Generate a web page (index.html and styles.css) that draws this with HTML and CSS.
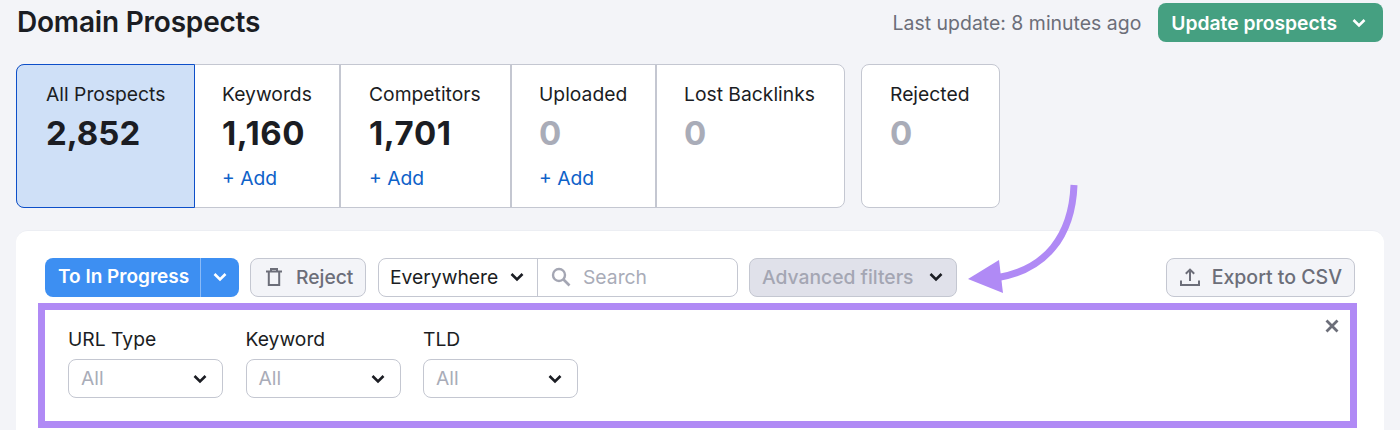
FILE: index.html
```html
<!DOCTYPE html>
<html lang="en">
<head>
<meta charset="utf-8">
<title>Domain Prospects</title>
<link rel="stylesheet" href="styles.css">
</head>
<body>
<div class="page">
  <header class="header">
    <h1 class="title">Domain Prospects</h1>
    <div class="header-right">
      <span class="updated">Last update: 8 minutes ago</span>
      <button class="btn-green">Update prospects
        <svg class="chev" viewBox="0 0 14 10" width="14" height="10"><path d="M1.5 2 7 7.5 12.5 2" fill="none" stroke="currentColor" stroke-width="2.6"/></svg>
      </button>
    </div>
  </header>

  <section class="tabs-row">
    <div class="tabs">
      <div class="tab tab-active w179"><div class="tab-label">All Prospects</div><div class="tab-num">2,852</div></div>
      <div class="tab w146"><div class="tab-label">Keywords</div><div class="tab-num wide">1,160</div><div class="tab-add">+ Add</div></div>
      <div class="tab w171"><div class="tab-label">Competitors</div><div class="tab-num wide">1,701</div><div class="tab-add">+ Add</div></div>
      <div class="tab w145"><div class="tab-label">Uploaded</div><div class="tab-num zero">0</div><div class="tab-add">+ Add</div></div>
      <div class="tab w187"><div class="tab-label">Lost Backlinks</div><div class="tab-num zero">0</div></div>
    </div>
    <div class="tab tab-single"><div class="tab-label">Rejected</div><div class="tab-num zero">0</div></div>
  </section>

  <main class="card">
    <div class="toolbar">
      <div class="split">
        <span class="split-main">To In Progress</span>
        <span class="split-arrow"><svg viewBox="0 0 14 10" width="14" height="10"><path d="M1.5 2 7 7.5 12.5 2" fill="none" stroke="currentColor" stroke-width="2.6"/></svg></span>
      </div>
      <button class="btn-grey btn-reject">
        <svg viewBox="0 0 16 18" width="16" height="18"><path d="M0 3.5h16M5 3V1h6V3M2.8 4v13h10.4V4" fill="none" stroke="#6c6e79" stroke-width="2"/></svg>
        Reject
      </button>
      <div class="search-group">
        <span class="scope">Everywhere
          <svg class="chev-dark" viewBox="0 0 14 10" width="14" height="10"><path d="M1.5 2 7 7.5 12.5 2" fill="none" stroke="currentColor" stroke-width="2.6"/></svg>
        </span>
        <span class="search">
          <svg viewBox="0 0 20 20" width="20" height="20"><circle cx="8" cy="8" r="6" fill="none" stroke="#a4a6b3" stroke-width="2.4"/><path d="M12.5 12.5l6 6" stroke="#a4a6b3" stroke-width="2.6"/></svg>
          Search
        </span>
      </div>
      <button class="btn-adv">Advanced filters
        <svg class="chev-dark" viewBox="0 0 14 10" width="14" height="10"><path d="M1.5 2 7 7.5 12.5 2" fill="none" stroke="currentColor" stroke-width="2.6"/></svg>
      </button>
      <button class="btn-grey btn-export">
        <svg viewBox="0 0 20 20" width="20" height="20"><path d="M10 14V3M5.8 6.8 10 2.6l4.2 4.2M1 13.5v4.5h18v-4.5" fill="none" stroke="#6c6e79" stroke-width="2"/></svg>
        Export to CSV
      </button>
    </div>

    <div class="filters">
      <div class="field">
        <label class="field-label">URL Type</label>
        <div class="select"><span>All</span><svg class="chev-dark" viewBox="0 0 14 10" width="14" height="10"><path d="M1.5 2 7 7.5 12.5 2" fill="none" stroke="currentColor" stroke-width="2.6"/></svg></div>
      </div>
      <div class="field">
        <label class="field-label">Keyword</label>
        <div class="select"><span>All</span><svg class="chev-dark" viewBox="0 0 14 10" width="14" height="10"><path d="M1.5 2 7 7.5 12.5 2" fill="none" stroke="currentColor" stroke-width="2.6"/></svg></div>
      </div>
      <div class="field">
        <label class="field-label">TLD</label>
        <div class="select"><span>All</span><svg class="chev-dark" viewBox="0 0 14 10" width="14" height="10"><path d="M1.5 2 7 7.5 12.5 2" fill="none" stroke="currentColor" stroke-width="2.6"/></svg></div>
      </div>
      <svg class="close" viewBox="0 0 14 14" width="14" height="14"><path d="M1.5 1.5l11 11M12.5 1.5l-11 11" stroke="#6c6e79" stroke-width="2.8"/></svg>
    </div>
  </main>

  <svg class="arrow" viewBox="0 0 110 112" width="110" height="112">
    <path d="M106 1C104 52 78 86 28 94" fill="none" stroke="#b08af5" stroke-width="7"/>
    <path d="M0 95 31 76 35 109Z" fill="#b08af5"/>
  </svg>
</div>
</body>
</html>
```

FILE: styles.css
```css
* { box-sizing: border-box; }
html, body { margin: 0; height: 100%; }
body { overflow: hidden; background: #f3f4f8; font-family: Inter, "Liberation Sans", sans-serif; color: #1b1d23; }
button { font-family: inherit; }
.page { position: relative; width: 1400px; height: 430px; overflow: hidden; padding: 3px 16px 0; }

.header { display: flex; justify-content: space-between; align-items: center; height: 39px; padding: 0 1px; }
.title { margin: 0; font-size: 28px; font-weight: 600; letter-spacing: -0.2px; line-height: 39px; }
.header-right { display: flex; align-items: center; gap: 17px; }
.updated { font-size: 19.45px; color: #6c6e79; }
.btn-green { display: flex; align-items: center; gap: 15px; height: 39px; padding: 0 17px 0 13px; border: 0; border-radius: 8px; background: #45a081; color: #fff; font-size: 19.3px; font-weight: 600; }

.tabs-row { display: flex; gap: 16px; margin-top: 22px; height: 144px; }
.tabs { display: flex; border: 1px solid #c4c7d1; border-radius: 8px; background: #fff; }
.tab { padding: 17px 0 0 27px; border-right: 2px solid #c4c7d1; }
.tab:last-child { border-right: 0; border-radius: 0 8px 8px 0; }
.tab-active { margin: -1px 0 -1px -1px; padding-left: 29px; background: #cfe0f7; border: 1px solid #0d4fc9; border-radius: 8px 0 0 8px; }
.w179 { width: 179px; }
.w146 { width: 146px; }
.w171 { width: 171px; padding-left: 28px; }
.w145 { width: 145px; }
.w187 { width: 187px; }
.tab-single { width: 139px; padding-left: 28px; border: 1px solid #c4c7d1; border-radius: 8px; background: #fff; }
.tab-single:last-child { border: 1px solid #c4c7d1; border-radius: 8px; }
.tab-label { font-size: 19.3px; line-height: 24px; }
.tab-num { margin-top: 6px; font-size: 33px; font-weight: 700; line-height: 42px; }
.wide { letter-spacing: 0.6px; }
.zero { color: #a9acb8; }
.tab-add { margin-top: 12px; font-size: 19.3px; line-height: 24px; color: #0f62c9; }

.card { margin-top: 22px; height: 220px; padding: 27px 27px 0 22px; background: #fff; border-radius: 12px 12px 0 0; border-top: 1px solid #eceef3; }
.toolbar { display: flex; align-items: center; height: 39px; margin: 0 2px 0 7px; }
.split { display: flex; width: 194px; height: 39px; padding-bottom: 2px; border-radius: 8px; background: #3d8ff2; color: #fff; font-size: 19px; font-weight: 600; }
.split-main { display: flex; align-items: center; width: 158px; margin-bottom: -2px; padding: 0 0 2px 13px; border-right: 1px solid #8abaf7; white-space: nowrap; }
.split-arrow { display: flex; align-items: center; padding: 0 12px; }
.btn-grey { display: flex; align-items: center; height: 39px; padding-bottom: 2px; border: 1px solid #c4c7d1; border-radius: 8px; background: #f3f4f8; color: #6c6e79; font-size: 19.3px; font-weight: 500; white-space: nowrap; }
.btn-reject { gap: 14px; width: 116px; margin-left: 11px; padding-left: 15px; padding-right: 0; }
.search-group { display: flex; height: 39px; width: 360px; margin-left: 12px; border: 1px solid #c4c7d1; border-radius: 8px; background: #fff; }
.scope { display: flex; align-items: center; gap: 12px; width: 159px; padding: 0 0 2px 11px; border-right: 1px solid #c4c7d1; font-size: 19.3px; white-space: nowrap; }
.chev-dark { color: #1b1d23; flex: none; }
.search { display: flex; align-items: center; gap: 12px; padding: 0 0 2px 13px; color: #a9acb8; font-size: 19.3px; }
.btn-adv { display: flex; align-items: center; gap: 15px; width: 208px; height: 39px; margin-left: 11px; padding: 0 0 2px 12px; border: 1px solid #c4c7d1; border-radius: 8px; background: #e0e1ea; color: #a4a6b3; font-size: 19.3px; font-weight: 500; white-space: nowrap; }
.btn-export { gap: 12px; margin-left: auto; padding-left: 13px; padding-right: 12px; font-size: 19.5px; }

.filters { position: relative; display: flex; gap: 22.5px; height: 125px; margin-top: 6px; padding: 17px 23px 0; border: 7px solid #b08af5; }
.field { width: 155px; }
.field-label { display: block; font-size: 19.3px; line-height: 24px; }
.select { display: flex; align-items: center; justify-content: space-between; height: 39px; margin-top: 8px; padding: 0 15px 0 12px; border: 1px solid #c4c7d1; border-radius: 8px; font-size: 19.3px; color: #a9acb8; }
.select span { margin-bottom: 2px; }
.close { position: absolute; top: 9px; right: 11px; }
.arrow { position: absolute; left: 968px; top: 184px; overflow: visible; }
```
